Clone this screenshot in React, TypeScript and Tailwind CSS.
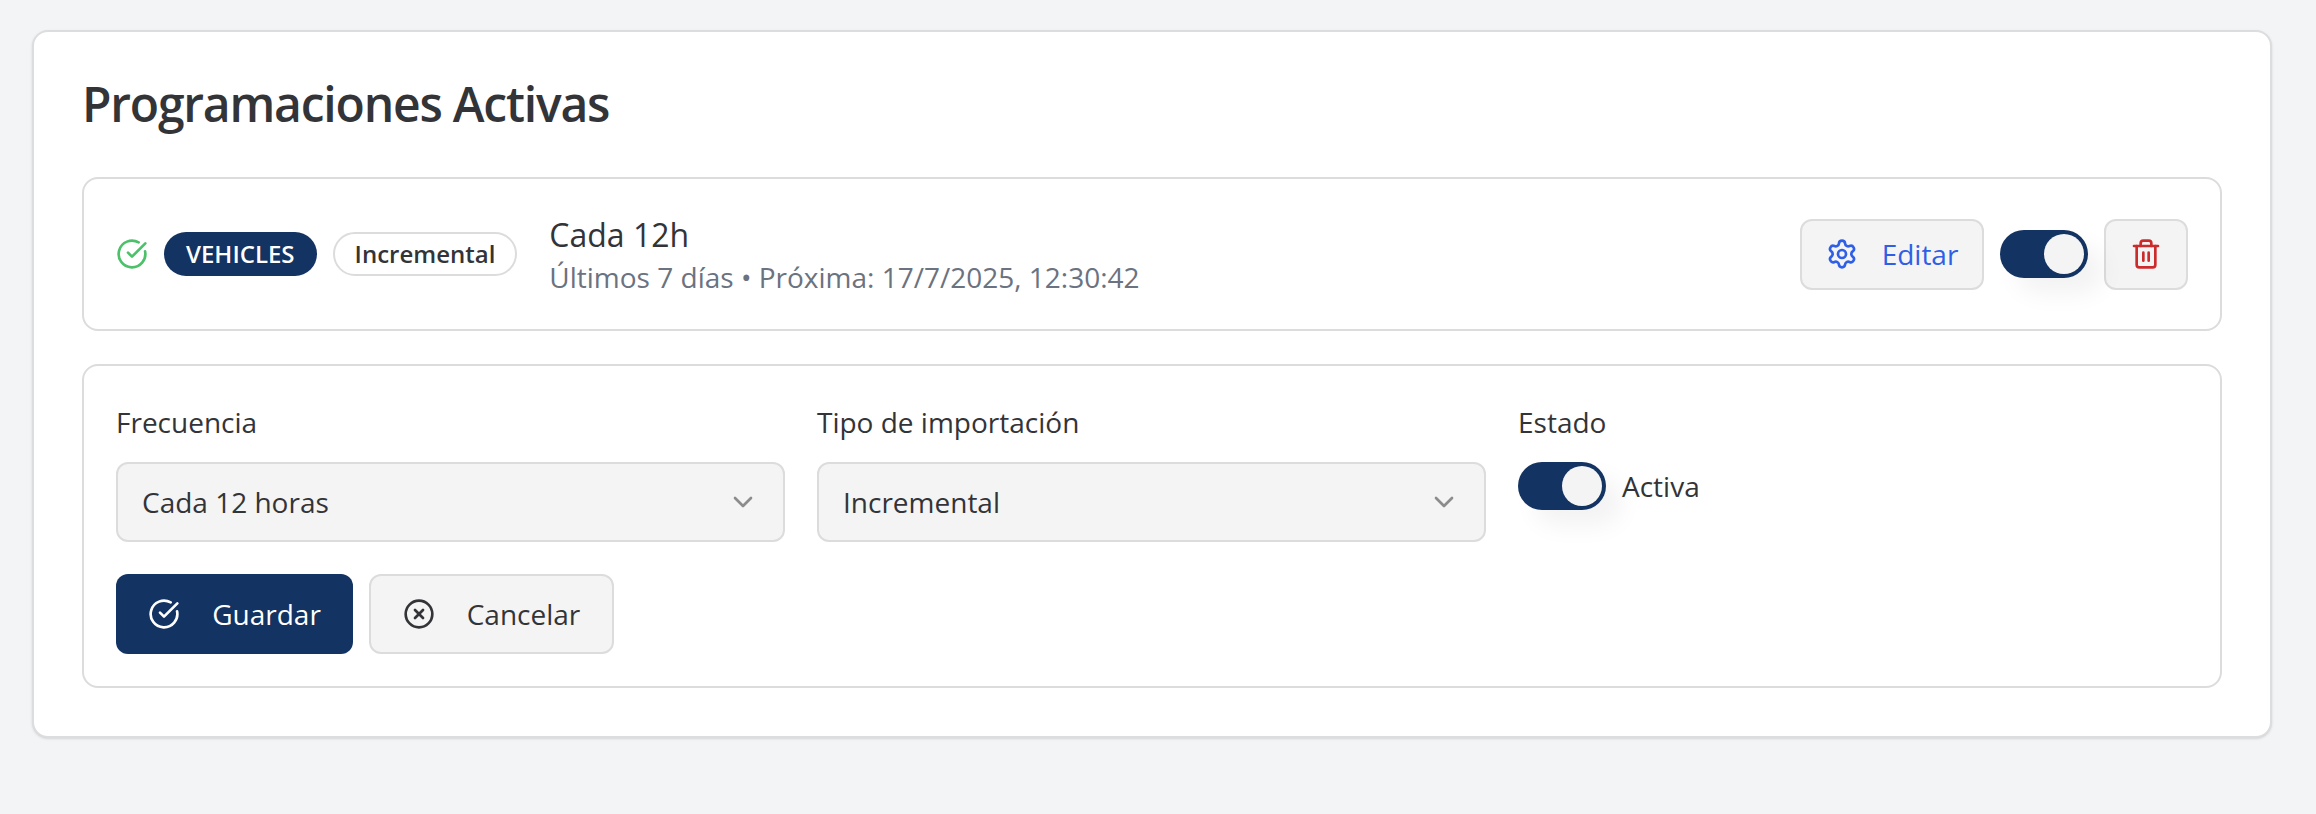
import { useState } from "react";
import { CircleCheckBig, ChevronDown, CircleX, Settings, Trash2 } from "lucide-react";

const Toggle = ({ checked, onChange }: { checked: boolean; onChange: () => void }) => (
  <button
    type="button"
    onClick={onChange}
    className="relative h-12 w-[88px] shrink-0 rounded-full bg-[#133362] shadow-[16px_16px_24px_rgba(0,0,0,0.05)]"
  >
    <span
      className={`absolute top-1 size-10 rounded-full bg-[#f4f4f4] ${checked ? "right-1" : "left-1"}`}
    />
  </button>
);

const Field = ({ label, value }: { label: string; value: string }) => (
  <div>
    <label className="mb-[15px] block text-[28px] leading-[49px] text-[#333438]">{label}</label>
    <div className="flex h-[80px] items-center justify-between rounded-xl border-2 border-[#dcdcdc] bg-[#f4f4f4] px-6 text-[28px] text-[#333438]">
      <span>{value}</span>
      <ChevronDown className="size-8 text-[#8c8c8c]" strokeWidth={2} />
    </div>
  </div>
);

export default function App() {
  const [active, setActive] = useState(true);
  const [formActive, setFormActive] = useState(true);

  return (
    <div className="min-h-[814px] bg-[#f3f4f6] pl-[32px] pr-[44px] pt-[30px] font-['Open_Sans',sans-serif]">
      <div className="rounded-2xl border-2 border-[#dcdddf] bg-white px-[48px] pb-[48px] pt-[39px] shadow-sm">
        <h2 className="mb-[40px] text-[48px] leading-[66px] font-semibold tracking-[-1.2px] text-[#333438]">
          Programaciones Activas
        </h2>

        {/* schedule row */}
        <div className="flex h-[154px] items-center justify-between rounded-2xl border-2 border-[#dcdcdc] px-8">
          <div className="flex items-center">
            <CircleCheckBig className="mr-4 size-8 text-[#4cc16a]" strokeWidth={2} />
            <span className="rounded-full bg-[#133362] px-[22px] py-[6px] text-[24px] leading-[32px] font-semibold text-white">
              VEHICLES
            </span>
            <span className="ml-4 rounded-full border-2 border-[#dcdcdc] px-[20px] py-[4px] text-[24px] leading-[32px] font-semibold text-[#333438]">
              Incremental
            </span>
            <div className="ml-8 pt-[3px]">
              <div className="text-[32px] leading-[42px] text-[#333438]">Cada 12h</div>
              <div className="text-[28px] leading-[42px] text-[#6b7280]">
                Últimos 7 días • Próxima: 17/7/2025, 12:30:42
              </div>
            </div>
          </div>
          <div className="flex items-center gap-4">
            <button className="flex h-[71px] w-[184px] items-center justify-center gap-6 rounded-xl border-2 border-[#dcdcdc] bg-[#f4f4f4] text-[28px] text-[#2f5fe6]">
              <Settings className="size-8" strokeWidth={2} />
              Editar
            </button>
            <Toggle checked={active} onChange={() => setActive(!active)} />
            <button className="flex h-[71px] w-[84px] items-center justify-center rounded-xl border-2 border-[#dcdcdc] bg-[#f4f4f4] text-[#cc2b2b]">
              <Trash2 className="size-8" strokeWidth={2} />
            </button>
          </div>
        </div>

        {/* edit form */}
        <div className="mt-[33px] rounded-2xl border-2 border-[#dcdcdc] p-8">
          <div className="grid grid-cols-[669px_669px_1fr] gap-8">
            <Field label="Frecuencia" value="Cada 12 horas" />
            <Field label="Tipo de importación" value="Incremental" />
            <div>
              <label className="mb-[15px] block text-[28px] leading-[49px] text-[#333438]">Estado</label>
              <div className="flex items-center gap-4">
                <Toggle checked={formActive} onChange={() => setFormActive(!formActive)} />
                <span className="text-[28px] text-[#333438]">Activa</span>
              </div>
            </div>
          </div>
          <div className="mt-[32px] flex gap-4">
            <button className="flex h-[80px] w-[237px] items-center justify-center gap-8 rounded-xl bg-[#133362] text-[28px] text-white">
              <CircleCheckBig className="size-8" strokeWidth={2} />
              Guardar
            </button>
            <button className="flex h-[80px] w-[245px] items-center justify-center gap-8 rounded-xl border-2 border-[#dcdcdc] bg-[#f4f4f4] text-[28px] text-[#333438]">
              <CircleX className="size-8" strokeWidth={2} />
              Cancelar
            </button>
          </div>
        </div>
      </div>
    </div>
  );
}
